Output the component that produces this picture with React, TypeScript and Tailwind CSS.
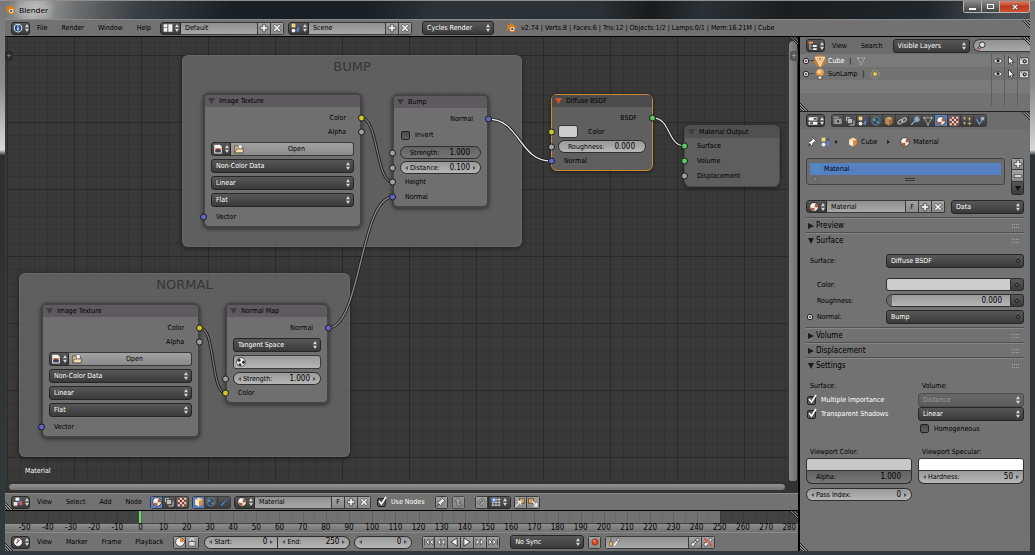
import type { ReactNode } from "react";
import clsx from "clsx";

const DARK = "bg-linear-to-b from-[#585858] to-[#3a3a3a] text-white";
const LIGHT = "bg-linear-to-b from-[#a2a2a2] to-[#8a8a8a] text-black";
const FIELD = "bg-linear-to-b from-[#8f8f8f] to-[#a9a9a9] text-black";
const NUM = "bg-linear-to-b from-[#9a9a9a] to-[#b6b6b6] text-black";
const SLIDE = "bg-linear-to-b from-[#626262] to-[#767676] text-black";

const drawings: Record<string, ReactNode> = {
    info: <><circle cx="8" cy="8" r="7" fill="#dde6f2" /><circle cx="8" cy="8" r="5.4" fill="#2d4f86" /><path d="M8 7v4.5M8 3.8v1.8" stroke="#fff" strokeWidth="2.2" /></>,
    layout: <><path d="M1 2h6v5H1zM1 8h6v6H1zM8.5 2H15v12H8.5z" fill="#f1f1f1" /></>,
    scene: <><rect x="1" y="1" width="6" height="6" fill="#f0d878" /><circle cx="4" cy="12" r="3" fill="#f4f4f4" /><path d="M9 9l4-3v7l-4 2z" fill="#5b82c4" /><circle cx="11" cy="4" r="2.5" fill="#40578a" /></>,
    blender: <><path d="M1 11l6-5H3V4h6L7.500 2.300 9 1l6 5.500" fill="none" stroke="#e87d0d" strokeWidth="1.800" strokeLinejoin="round" /><circle cx="10" cy="9.500" r="5" fill="#e87d0d" /><circle cx="10" cy="9.500" r="3.300" fill="#fff" /><circle cx="10" cy="9.500" r="1.900" fill="#265787" /></>,
    outliner: <><rect x="1" y="1" width="7" height="3" fill="#f0a050" /><path d="M3 4v9h4M3 8h4" stroke="#ddd" fill="none" /><path d="M8 6.500h6v3H8zM8 11.500h6v3H8z" fill="#f2f2f2" /></>,
    props: <><rect x="1" y="2" width="14" height="5" rx="1" fill="#f1f1f1" /><rect x="1" y="9" width="14" height="5" rx="1" fill="#f1f1f1" /><path d="M9 3h5v3H9zM3 10h5v3H3z" fill="#555" /></>,
    nodes: <><rect x="1" y="8" width="6" height="6" fill="#e8e8e8" /><rect x="4" y="1" width="6" height="5" fill="#f4f4f4" /><path d="M7 11c4 0 2-6 5-6" stroke="#4a78d0" strokeWidth="2.500" fill="none" /><rect x="10" y="7" width="5" height="6" fill="#d05a40" /></>,
    clock: <><circle cx="8" cy="8" r="7" fill="#f3f3f3" stroke="#222" /><path d="M8 3v5l-3 2" stroke="#222" strokeWidth="1.300" fill="none" /><path d="M8 8l3.500-4" stroke="#c8442a" strokeWidth="1.300" /></>,
    range: <><circle cx="8" cy="8" r="7" fill="#f3f3f3" stroke="#222" /><path d="M8 8V2a6 6 0 0 1 6 6z" fill="#f08030" /></>,
    mesh: <><circle cx="8" cy="8" r="8" fill="#e8821e" opacity=".65" /><path d="M2 3h12L8 15zM5 3l3 8 3-8" fill="none" stroke="#ffe2b8" strokeWidth="1.500" /></>,
    tri: <path d="M2 3h12L8 14z" fill="none" stroke="#c9c9c9" strokeWidth="1.200" strokeDasharray="4 1.500" />,
    lamp: <><circle cx="8" cy="6" r="5" fill="#f6a04a" /><circle cx="7" cy="5" r="2" fill="#ffe9cf" /><path d="M5.500 10.500h5V15h-5z" fill="#e8e8e8" stroke="#4a3a2a" /></>,
    sun: <><circle cx="8" cy="8" r="3.500" fill="#e8cf6a" stroke="#7a6a30" /><circle cx="8" cy="8" r="6.500" fill="none" stroke="#d9c878" strokeWidth="1.500" strokeDasharray="1.500 2.600" /></>,
    eye: <><path d="M1 8q7-8 14 0-7 7-14 0z" fill="#f4f4f4" stroke="#222" /><circle cx="8" cy="7.500" r="2.600" fill="#222" /></>,
    cursor: <path d="M4 1v12l3-2.500 2 4.500 2.200-1-2-4.300H13z" fill="#f4f4f4" stroke="#111" />,
    camera: <><rect x="1" y="3" width="14" height="11" rx="1" fill="#e4e4e4" stroke="#222" /><circle cx="9" cy="8.500" r="3.500" fill="#333" /><circle cx="9" cy="8.500" r="1.500" fill="#c9c9c9" /><path d="M3 5h2" stroke="#222" strokeWidth="1.500" /></>,
    render: <><rect x="1" y="4" width="13" height="9" fill="#8d8d8d" /><circle cx="8" cy="8.500" r="3" fill="#444" stroke="#c8c8c8" /><path d="M1 2h8" stroke="#bbb" strokeWidth="1.500" /></>,
    layers: <><rect x="1" y="1" width="8" height="8" fill="#a9b6c6" stroke="#333" /><rect x="4" y="4" width="8" height="8" fill="#bcbcbc" stroke="#333" /><path d="M7 14.500h7.500V7" stroke="#c9c9c9" strokeWidth="1.500" fill="none" /></>,
    world: <><circle cx="8" cy="8" r="6.500" fill="#35506f" stroke="#8495a8" /><path d="M4 4q4-1 3 3-3 2-4-1zM9 8q5 0 3 4-3 0-3-4z" fill="#7f8f9d" /></>,
    cube: <><path d="M2 4l6-3 6 3v8l-6 3-6-3z" fill="#e88a2e" /><path d="M2 4l6 2.500L14 4 8 1z" fill="#fbd9ad" /><path d="M8 6.500V15l-6-3V4z" fill="#fff1e0" /></>,
    cubeDim: <><path d="M2 4l6-3 6 3v8l-6 3-6-3z" fill="#a06a38" /><path d="M2 4l6 2.500L14 4 8 1z" fill="#d2a678" /><path d="M8 6.500V15l-6-3V4z" fill="#b98a5c" /></>,
    link: <g fill="none" stroke="#b5b5b5" strokeWidth="1.800"><rect x="1" y="7" width="8" height="5" rx="2.500" transform="rotate(-35 5 9)" /><rect x="7" y="4" width="8" height="5" rx="2.500" transform="rotate(-35 11 6)" /></g>,
    wrench: <path d="M2 14l7-7M8 6a3.500 3.500 0 0 1 5-4l-2 2 1 1.500 2.500-1A3.500 3.500 0 0 1 9 8z" fill="#8fa9cc" stroke="#8fa9cc" strokeWidth="2" />,
    data: <><path d="M2 3h12L8 14z" fill="none" stroke="#b5b5b5" strokeWidth="1.200" /><path d="M1 2h2v2H1zM13 2h2v2h-2zM7 13h2v2H7z" fill="#ddd" /></>,
    material: <><circle cx="8" cy="8" r="7" fill="#efe4de" stroke="#2a1a16" /><path d="M9 8q0-4 2.500-5.500A6.500 6.500 0 0 1 14.500 8q-2.500 1.500-5.500 0zM8.500 9q-4 1-6.500-.5a6.500 6.500 0 0 0 6 6q1.500-2.500.5-5.500z" fill="#a8604a" /><circle cx="5.500" cy="5" r="2.500" fill="#fff" /></>,
    checker: <><path d="M1 1h14v14H1z" fill="#e0cfca" /><path d="M1 1h3.500v3.500H1zM8 1h3.500v3.500H8zM4.500 4.500H8V8H4.500zM11.500 4.500H15V8h-3.500zM1 8h3.500v3.500H1zM8 8h3.500v3.500H8zM4.500 11.500H8V15H4.500zM11.500 11.500H15V15h-3.500z" fill="#83392c" /></>,
    particles: <g stroke="#c6b27c" strokeWidth="1.300"><path d="M4 1v5M1.500 3.500h5M12 2v5M9.500 4.500h5M4 9v5M1.500 11.500h5M12 9v6M9 12h6" /></g>,
    physics: <><path d="M2 5l5 8 7-11" fill="none" stroke="#6f8fbf" strokeWidth="2" /><circle cx="12" cy="4" r="3" fill="#9db4d6" /></>,
    pin: <path d="M9 1l6 6-1.500 1-1.500-.5-3 3 .2 2.500-1.500 1L5 11.300 1.500 15 1 14.500 4.700 11 2 8.300l1-1.500 2.500.2 3-3L8 2.500z" fill="#f0f0f0" stroke="#222" />,
    image: <><path d="M2 1h9l3 3v11H2z" fill="#f4f4f4" /><path d="M3.500 6.500h9V11h-9z" fill="#d9764e" /><path d="M3.500 10q4-4 9 0v3.500h-9z" fill="#3e3e55" /></>,
    folder: <><path d="M1 3h5l1 2h7v9H1z" fill="#d8c08c" stroke="#4e3f22" /><path d="M7 1h6v7H7z" fill="#f7f7f7" stroke="#555" strokeWidth=".7" /><path d="M4 8h11.500L14 14H1.500z" fill="#f1e0b4" stroke="#4e3f22" /></>,
    ball: <><circle cx="8" cy="8" r="7" fill="#f2f2f2" stroke="#222" /><path d="M5 2l3 3-3 3-3-2zM9 8l4-3 1.500 4-3 2zM5 10l4 1-1 3.500-4-1.500z" fill="#222" /></>,
    brush: <path d="M2 15q0-4 4-6l8-8q1 0 1 1l-7 9q-2 4-6 4z" fill="#5f86c0" stroke="#1e2f4c" strokeWidth=".8" />,
    plus: <path d="M6 2h4v4h4v4h-4v4H6v-4H2V6h4z" fill="#f6f6f6" stroke="#222" />,
    minus: <path d="M2 6h12v4H2z" fill="#f6f6f6" stroke="#222" />,
    cross: <path d="M2 4.500L4.500 2 8 5.500 11.500 2 14 4.500 10.500 8l3.500 3.500-2.500 2.500L8 10.500 4.500 14 2 11.500 5.500 8z" fill="#f6f6f6" stroke="#222" />,
    down: <path d="M2 4h12L8 14z" fill="#111" />,
    up: <path d="M6 14V7H3l5-6 5 6h-3v4h4v3z" fill="#b8b8b8" stroke="#444" />,
    magnet: <path d="M2 9l6-6a4 4 0 0 1 5.500 5.500L8 14l-2-2 5-5.500a1 1 0 0 0-1.500-1.500L4 11z" fill="#b0b0b0" stroke="#444" />,
    snap: <><path d="M3 1v14M8 1v14M13 1v14M1 4h14M1 8.500h14M1 13h14" stroke="#e4e4e4" strokeWidth="1.200" /><circle cx="4.500" cy="4.500" r="4" fill="#5b8ae0" /><circle cx="4.500" cy="4.500" r="1.800" fill="#fff" /></>,
    copy: <><rect x="7" y="2" width="8" height="8" fill="#d1a36a" stroke="#4e3f22" /><path d="M1 15l7-7M4 7h5v5" stroke="#f4f4f4" strokeWidth="2" fill="none" /></>,
    paste: <><rect x="1" y="2" width="8" height="8" fill="#d1a36a" stroke="#4e3f22" /><path d="M7 7l7 7M14 9v5.500H9" stroke="#f4f4f4" strokeWidth="2" fill="none" /></>,
    lock: <><path d="M5 8V5a3 3 0 0 1 6 0v1" fill="none" stroke="#e8e8e8" strokeWidth="1.800" /><rect x="3" y="7.500" width="10" height="7" fill="#dcdcdc" stroke="#333" /></>,
    first: <path d="M1 3v10M8 3L3 8l5 5zM14.500 3l-5 5 5 5z" fill="#f6f6f6" stroke="#222" />,
    prevKey: <path d="M7.500 3l-5 5 5 5zM14 3L9 8l5 5z" fill="#f6f6f6" stroke="#222" />,
    reverse: <path d="M13 1.500v13L3 8z" fill="#f6f6f6" stroke="#222" strokeWidth="1.300" />,
    play: <path d="M3 1.500v13L13 8z" fill="#f6f6f6" stroke="#222" strokeWidth="1.300" />,
    nextKey: <path d="M2 3l5 5-5 5zM8.500 3l5 5-5 5z" fill="#f6f6f6" stroke="#222" />,
    last: <path d="M1.500 3l5 5-5 5zM8 3l5 5-5 5zM15 3v10" fill="#f6f6f6" stroke="#222" />,
    record: <><circle cx="8" cy="8" r="5" fill="#e24a20" stroke="#6e2412" /><circle cx="6.500" cy="6.500" r="1.800" fill="#f58c6a" /></>,
    keying: <><path d="M4 1v7M2 8h4v5H2z" fill="#e9d277" stroke="#6e5a20" /><path d="M8 13l5-7" stroke="#eee" strokeWidth="2" /><circle cx="13.500" cy="5" r="2" fill="#eee" stroke="#444" /></>,
    key: <><path d="M5 12l6-7" stroke="#222" strokeWidth="4" /><circle cx="4.500" cy="12" r="3" fill="#f4f4f4" stroke="#222" /><path d="M5 12l6-7" stroke="#f4f4f4" strokeWidth="2" /><circle cx="12" cy="4.500" r="2.500" fill="#f4f4f4" stroke="#222" /></>,
    keyOff: <><circle cx="4.500" cy="12" r="3" fill="#f4f4f4" stroke="#222" /><path d="M5 12l6-7" stroke="#f4f4f4" strokeWidth="2" /><circle cx="12" cy="4.500" r="2.500" fill="#f4f4f4" stroke="#222" /><path d="M2 2l12 12" stroke="#e04a28" strokeWidth="2.500" /></>,
    lens: <><path d="M2 14l5-5" stroke="#222" strokeWidth="4" /><path d="M2 14l5-5" stroke="#d99a86" strokeWidth="2.200" /><circle cx="10" cy="6" r="4.500" fill="#dcdcdc" stroke="#222" strokeWidth="1.400" /></>,
    expand: <><circle cx="8" cy="8" r="5.500" fill="#e8e8e8" stroke="#222" strokeWidth="2" /><path d="M8 5.500v5M5.500 8h5" stroke="#222" strokeWidth="1.600" /></>,
};

const Icon = ({ name, size = "size-2.5", className }: { name: string; size?: string; className?: string }) => (
    <svg viewBox="0 0 16 16" className={clsx("shrink-0", size, className)} aria-hidden="true">{drawings[name]}</svg>
);

const UpDown = () => (
    <svg viewBox="0 0 5 10" className="h-2 w-1 shrink-0 fill-[#d8d8d8]" aria-hidden="true"><path d="M2.500 0L5 4H0zM2.500 10L0 6h5z" /></svg>
);

const Corner = ({ className }: { className: string }) => (
    <svg viewBox="0 0 8 8" className={clsx("pointer-events-none absolute size-2", className)} aria-hidden="true">
        <path d="M0 0l8 8M3 0l5 5M6 0l2 2" stroke="#222" /><path d="M1 0l7 7M4 0l4 4" stroke="#aaa" strokeWidth=".6" />
    </svg>
);

/* lower left grip, same stripes below the diagonal */
const CornerLeft = () => <Corner className="bottom-0 left-0 rotate-180" />;

const EditorButton = ({ icon, label, className = "w-[19px] rounded-[3px]" }: { icon: string; label: string; className?: string }) => (
    <button aria-label={label} className={clsx("flex h-[13px] shrink-0 items-center justify-center gap-0.5 border border-[#2a2a2a]", DARK, className)}>
        <Icon name={icon} /><UpDown />
    </button>
);

const Square = ({ icon, label, className = LIGHT }: { icon: string; label: string; className?: string }) => (
    <button aria-label={label} className={clsx("flex h-[13px] w-[13px] shrink-0 items-center justify-center border border-[#3a3a3a] not-first:border-l-0", className)}>
        <Icon name={icon} />
    </button>
);

const Group = ({ children }: { children: ReactNode }) => <div className="flex shrink-0 overflow-hidden rounded-[3px]">{children}</div>;

const Menus = ({ items }: { items: string[] }) => (
    <nav className="ml-[7px] flex gap-3.5">{items.map((item) => <button key={item}>{item}</button>)}</nav>
);

const Dot = () => <span className="size-1 rounded-full border border-[#1c1c1c] bg-[#6a6a6a]" />;

const Select = ({ label, value, className, disabled, dot }: { label: string; value: string; className?: string; disabled?: boolean; dot?: boolean }) => (
    <div className={clsx("flex h-[14px] items-center rounded-[3px] border pr-[3px]", disabled ? "border-[#4e4e4e] bg-linear-to-b from-[#676767] to-[#5c5c5c] text-[#9a9a9a]" : clsx("border-[#262626]", DARK), className)}>
        <select aria-label={label} disabled={disabled} className="h-full min-w-0 flex-1 appearance-none bg-transparent pl-1 outline-none">
            <option>{value}</option>
        </select>
        {dot ? <Dot /> : <UpDown />}
    </div>
);

const IdField = ({ icon, label, value, fake, className = "w-[77px]" }: { icon: string; label: string; value: string; fake?: boolean; className?: string }) => (
    <Group>
        <EditorButton icon={icon} label={`Browse ${label}`} className="w-[21px] rounded-l-[3px]" />
        <input aria-label={label} defaultValue={value} className={clsx("h-[13px] min-w-0 border border-l-0 border-[#3a3a3a] pl-1 outline-none", FIELD, className)} />
        {fake && <button className={clsx("h-[13px] w-[13px] border border-l-0 border-[#3a3a3a]", LIGHT)}>F</button>}
        <Square icon="plus" label={`Add ${label}`} />
        <Square icon="cross" label={`Unlink ${label}`} />
    </Group>
);

const NumField = ({ label, value, tone = NUM, arrows = true, className = "rounded-full" }: { label: string; value: string; tone?: string; arrows?: boolean; className?: string }) => (
    <label className={clsx("flex h-[13px] items-center border border-[#2e2e2e] px-1", tone, className)}>
        <svg viewBox="0 0 3 4" className={clsx("h-1 w-[3px] shrink-0 fill-[#555]", !arrows && "invisible")} aria-hidden="true"><path d="M3 0v4L0 2z" /></svg>
        <span className="ml-0.5 whitespace-nowrap">{label}</span>
        <input aria-label={label || "Current frame"} defaultValue={value} className="mr-[3px] w-0 min-w-0 flex-1 bg-transparent text-right text-[8px] outline-none" />
        <svg viewBox="0 0 3 4" className={clsx("h-1 w-[3px] shrink-0 fill-[#555]", !arrows && "invisible")} aria-hidden="true"><path d="M0 0v4l3-2z" /></svg>
    </label>
);

const Check = ({ label, checked, className }: { label: string; checked?: boolean; className?: string }) => (
    <label className={clsx("flex items-center gap-[5px] whitespace-nowrap", className)}>
        <span className="relative flex size-[9px]">
            <input type="checkbox" defaultChecked={checked} className="peer size-[9px] appearance-none rounded-[2px] border border-[#222] bg-linear-to-b from-[#4a4a4a] to-[#606060]" />
            <svg viewBox="0 0 10 10" className="pointer-events-none absolute -top-0.5 left-0 hidden size-2.5 peer-checked:block" aria-hidden="true"><path d="M2 5l2.500 3L9 1" fill="none" stroke="#fff" strokeWidth="1.600" /></svg>
        </span>
        {label}
    </label>
);

/* node editor */

const socketColors = { yellow: "bg-[#c9c72c]", gray: "bg-[#a1a1a1]", blue: "bg-[#6464c8]", green: "bg-[#5bc95b]" };

const Socket = ({ color, side }: { color: keyof typeof socketColors; side: "left" | "right" }) => (
    <span className={clsx("absolute top-1/2 size-[7px] -translate-y-1/2 rounded-full border border-[#1c1c1c]", socketColors[color], side === "left" ? "-left-[3px]" : "-right-[3px]")} />
);

const Row = ({ children, color, out, className = "h-[14px]" }: { children: ReactNode; color?: keyof typeof socketColors; out?: boolean; className?: string }) => (
    <div className={clsx("relative flex items-center", out ? "justify-end pr-4" : "pl-[13px]", className)}>
        {children}
        {color && <Socket color={color} side={out ? "right" : "left"} />}
    </div>
);

const Node = ({ title, children, place, head = "bg-[#5e5a60]", arrow = "fill-[#3c3c3c]", frame = "border-2 border-[#444] bg-[#6f6f6f]" }: { title: string; children: ReactNode; place: string; head?: string; arrow?: string; frame?: string }) => (
    <section className={clsx("absolute rounded-md shadow-[0_1px_4px_#0008]", frame, place)}>
        <h3 className={clsx("flex h-3 items-center gap-1 rounded-t-[4px] pl-[3px]", head)}>
            <svg viewBox="0 0 7 6" className={clsx("h-1.5 w-[7px]", arrow)} aria-hidden="true"><path d="M0 0h7L3.500 6z" /></svg>
            {title}
        </h3>
        {children}
    </section>
);

const ImageTexture = ({ place }: { place: string }) => (
    <Node title="Image Texture" place={place}>
        <div className="-mx-0.5 pt-1 pb-0.5">
            <Row color="yellow" out>Color</Row>
            <Row color="gray" out>Alpha</Row>
            <div className="mt-[3px] mb-[3px] flex flex-col gap-[3px] px-2">
                <div className="flex h-[14px]">
                    <EditorButton icon="image" label="Browse image" className="h-[14px] w-5 rounded-l-[3px]" />
                    <button className={clsx("flex flex-1 items-center rounded-r-[3px] border border-l-0 border-[#3a3a3a] pl-[3px]", LIGHT)}>
                        <Icon name="folder" /><span className="flex-1 pr-1">Open</span>
                    </button>
                </div>
                <Select label="Color space" value="Non-Color Data" />
                <Select label="Interpolation" value="Linear" />
                <Select label="Projection" value="Flat" />
            </div>
            <Row color="blue">Vector</Row>
        </div>
    </Node>
);

const Frame = ({ title, place }: { title: string; place: string }) => (
    <div className={clsx("absolute rounded-md border border-[#777]/40 bg-[#696969]/80 pt-[3px] text-center font-['DejaVu_Sans',sans-serif] text-[13px] leading-[15px] text-[#363636] shadow-[0_1px_5px_#0008]", place)}>{title}</div>
);

const links = [
    { d: "M356 81C374 81 370 145 388 145", color: "#777" },
    { d: "M195 291C211 291 205 356 221 356", color: "#777" },
    { d: "M323 291C356 291 355 160 388 160", color: "#8a8a8a" },
    { d: "M483 82C515 82 514 124 546 124", color: "#e8e8e8" },
    { d: "M648 81C666 81 662 109 680 109", color: "#ddd" },
];

const NodeEditor = () => (
    <main className="relative min-h-[456px] flex-1 overflow-hidden bg-[#393939]">
        <svg className="absolute inset-0 size-full" aria-hidden="true">
            <defs>
                <pattern id="grid" width="67" height="67" x="2" y="18" patternUnits="userSpaceOnUse">
                    <path d="M13.500 0v67M27.500 0v67M40.500 0v67M54.500 0v67M0 13.500h67M0 27.500h67M0 40.500h67M0 54.500h67" stroke="#333" />
                    <path d="M.5 0v67M0 .5h67" stroke="#2a2a2a" />
                </pattern>
            </defs>
            <rect width="100%" height="100%" fill="url(#grid)" />
        </svg>
        <Frame title="BUMP" place="left-[177px] top-[18px] h-[192px] w-[340px]" />
        <Frame title="NORMAL" place="left-[14px] top-[236px] h-[184px] w-[331px]" />
        <svg className="pointer-events-none absolute inset-0 size-full" fill="none" aria-hidden="true">
            {links.map((link) => <g key={link.d}><path d={link.d} stroke="#1c1c1c" strokeWidth="3" /><path d={link.d} stroke={link.color} strokeWidth="1.300" /></g>)}
        </svg>
        <ImageTexture place="left-[198px] top-[56px] w-[159px]" />
        <ImageTexture place="left-[36px] top-[266px] w-[159px]" />
        <Node title="Bump" place="left-[387px] top-[57px] w-[97px]">
            <div className="-mx-0.5 pt-1 pb-0.5">
                <Row color="blue" out>Normal</Row>
                <Row className="mt-0.5 h-[14px]"><Check label="Invert" className="-ml-1" /></Row>
                <Row color="gray" className="mt-1 h-[13px]"><NumField label="Strength:" value="1.000" tone={SLIDE} arrows={false} className="-ml-[5px] mr-2 flex-1 rounded-full" /></Row>
                <Row color="gray" className="mt-0.5 h-[13px]"><NumField label="Distance:" value="0.100" className="-ml-[5px] mr-2 flex-1 rounded-full" /></Row>
                <Row color="gray" className="mt-px h-[14px]">Height</Row>
                <Row color="blue" className="mt-px h-[14px]">Normal</Row>
            </div>
        </Node>
        <Node title="Normal Map" place="left-[220px] top-[266px] w-[104px]">
            <div className="-mx-0.5 pt-1 pb-0.5">
                <Row color="blue" out>Normal</Row>
                <div className="mt-[3px] flex flex-col gap-[3px] px-2">
                    <Select label="Space" value="Tangent Space" />
                    <label className={clsx("flex h-[14px] items-center rounded-[3px] border border-[#3a3a3a] pl-0.5", NUM)}>
                        <Icon name="ball" /><input aria-label="UV map" className="min-w-0 flex-1 outline-none" />
                    </label>
                </div>
                <Row color="gray" className="mt-[3px] h-[13px]"><NumField label="Strength:" value="1.000" className="-ml-[5px] mr-2 flex-1 rounded-full" /></Row>
                <Row color="yellow" className="mt-px h-[14px]">Color</Row>
            </div>
        </Node>
        <Node title="Diffuse BSDF" place="left-[546px] top-[57px] w-[102px]" head="bg-[#4b4b4b]" arrow="fill-[#d8532a]" frame="border border-[#c98a35] bg-[#5f5f5f]">
            <div className="-mx-px pt-1 pb-0.5">
                <Row color="green" out>BSDF</Row>
                <Row color="yellow" className="h-[13px]">
                    <button aria-label="Color" className="-ml-1.5 mr-2.5 h-[13px] w-5 rounded-[3px] border border-[#333] bg-[#cdcdcd]" />Color
                </Row>
                <Row color="gray" className="mt-0.5 h-[13px]"><NumField label="Roughness:" value="0.000" arrows={false} className="-ml-1.5 mr-[7px] flex-1 rounded-full" /></Row>
                <Row color="blue" className="mt-px h-[14px]">Normal</Row>
            </div>
        </Node>
        <Node title="Material Output" place="left-[679px] top-[88px] w-[96px]" head="bg-[#505050]" frame="border border-[#4a4a4a] bg-[#5e5e5e]">
            <div className="-mx-px pt-px pb-[3px]">
                <Row color="green">Surface</Row>
                <Row color="green" className="mt-px h-[14px]">Volume</Row>
                <Row color="gray" className="mt-px h-[14px]">Displacement</Row>
            </div>
        </Node>
        <span className="absolute bottom-[17px] left-5 text-white">Material</span>
        <span className="absolute top-3.5 left-0 flex h-2.5 w-2 items-center justify-center rounded-r-[3px] bg-[#2c2c2c] text-[#999]">+</span>
        <div className="absolute top-0 right-0 bottom-2.5 w-2.5 bg-[#323232] pt-[3px]"><div className="h-full rounded-full border border-[#333] bg-linear-to-r from-[#8a8a8a] to-[#6e6e6e]" /></div>
        <div className="absolute inset-x-0 bottom-0 h-3 bg-[#333] py-0.5 pr-3 pl-[3px]"><div className="h-full rounded-full border border-[#333] bg-linear-to-b from-[#929292] to-[#747474]" /></div>
        <span className="absolute top-3.5 right-0 flex h-2.5 w-2 items-center justify-center rounded-l-[3px] bg-[#555] text-[#bbb]">+</span>
        <Corner className="top-0 right-0" />
    </main>
);

const barClass = "relative flex shrink-0 items-center border-t border-[#8a8a8a] bg-[#727272] px-1.5";

const NodeHeader = () => (
    <div className={clsx(barClass, "h-[17px]")}>
        <EditorButton icon="nodes" label="Editor type" />
        <Menus items={["View", "Select", "Add", "Node"]} />
        <div className="ml-2 flex gap-[3px]">
            <Group>
                <Square icon="material" label="Shader nodes" className="bg-[#5680c2]" />
                <Square icon="layers" label="Compositing nodes" className={DARK} />
                <Square icon="checker" label="Texture nodes" className={DARK} />
            </Group>
            <Group>
                <Square icon="cube" label="Object" className="bg-[#5680c2]" />
                <Square icon="world" label="World" className={DARK} />
                <Square icon="brush" label="Line style" className={DARK} />
            </Group>
            <IdField icon="material" label="Material name" value="Material" fake />
        </div>
        <Check label="Use Nodes" checked className="mr-2.5 ml-1.5 text-white" />
        <Group><Square icon="pin" label="Pin" /></Group>
        <div className="ml-1 opacity-70"><Group><Square icon="up" label="Parent node tree" /></Group></div>
        <div className="ml-2.5 flex gap-[3px]">
            <Group>
                <Square icon="magnet" label="Snap" />
                <EditorButton icon="snap" label="Snap element" className="w-[23px]" />
            </Group>
            <Group><Square icon="copy" label="Copy" /><Square icon="paste" label="Paste" /></Group>
        </div>
        <CornerLeft />
    </div>
);

const frames = Array.from({ length: 34 }, (_, i) => -50 + i * 10);

const Timeline = () => (
    <div className="relative shrink-0 overflow-hidden border-t border-black bg-[#727272]">
        <div className="-mr-[3px] flex">
            <div className="w-2 bg-[#424242]" />
            {frames.map((frame) => (
                <div key={frame} className="flex h-3 flex-1">
                    <span className={clsx("flex-1 border-l", frame <= 0 || frame > 250 ? "border-[#3c3c3c] bg-[#424242]" : "border-[#6a6a6a] bg-[#727272]", frame === 0 && "border-r-2 border-r-[#5fe05f]")} />
                    <span className={clsx("flex-1 border-l", frame < 0 || frame >= 250 ? "border-[#383838] bg-[#424242]" : "border-[#626262] bg-[#727272]")} />
                </div>
            ))}
        </div>
        <div className="-mr-[3px] flex h-[9px] items-center border-t border-[#444] bg-linear-to-b from-[#8e8e8e] to-[#707070] pl-2 text-[8px] leading-[8px]">
            {frames.map((frame) => <span key={frame} className="w-0 flex-1 text-center">{frame <= 280 ? frame : ""}</span>)}
        </div>
        <Corner className="top-0 right-0" />
    </div>
);

const TimelineHeader = () => (
    <div className={clsx(barClass, "h-[19px]")}>
        <EditorButton icon="clock" label="Editor type" />
        <Menus items={["View", "Marker", "Frame", "Playback"]} />
        <div className="mr-[5px] ml-2.5"><Group><Square icon="range" label="Preview range" /><Square icon="lock" label="Lock time" /></Group></div>
        <NumField label="Start:" value="0" className="w-[74px] rounded-l-full" />
        <NumField label="End:" value="250" className="w-[72px] rounded-r-full border-l-0" />
        <NumField label="" value="0" className="ml-1 w-[58px] rounded-full" />
        <div className="mr-2.5 ml-2.5"><Group>
            <Square icon="first" label="Jump to start" />
            <Square icon="prevKey" label="Previous keyframe" />
            <Square icon="reverse" label="Play reverse" />
            <Square icon="play" label="Play" />
            <Square icon="nextKey" label="Next keyframe" />
            <Square icon="last" label="Jump to end" />
        </Group></div>
        <Select label="Sync mode" value="No Sync" className="w-[74px]" />
        <div className="mx-1"><Group><Square icon="record" label="Auto keyframe" /></Group></div>
        <Group>
            <label className={clsx("flex h-[13px] w-[84px] items-center border border-[#3a3a3a] pl-0.5", FIELD)}><Icon name="keying" size="size-3" /><input aria-label="Keying set" className="min-w-0 flex-1 outline-none" /></label>
            <Square icon="key" label="Insert keyframe" />
            <Square icon="keyOff" label="Delete keyframe" />
        </Group>
        <CornerLeft />
    </div>
);

/* right column */

const Outliner = () => (
    <div className="relative h-[75px] shrink-0 overflow-hidden border-b border-[#222] bg-[#727272]">
        <div className="flex h-[17px] items-center bg-[#6c6c6c] pl-1.5">
            <EditorButton icon="outliner" label="Editor type" />
            <Menus items={["View", "Search"]} />
            <Select label="Display mode" value="Visible Layers" className="ml-2.5 w-[77px]" />
            <label className={clsx("ml-[3px] flex h-[13px] flex-1 items-center rounded-l-full border border-r-0 border-[#3a3a3a] pl-0.5", FIELD)}>
                <Icon name="lens" /><input aria-label="Search" className="w-0 min-w-0 flex-1 outline-none" />
            </label>
        </div>
        {[["Cube", "mesh", "tri"], ["SunLamp", "lamp", "sun"], ["", "", ""], ["", "", ""]].map(([name, icon, data], key) => (
            <div key={key} className="flex h-[13px] items-stretch odd:bg-[#727272] even:bg-[#7a7a7a]">
                {name && <div className="flex flex-1 items-center pl-0.5">
                    <Icon name="expand" size="size-2" /><span className="h-px w-1 bg-[#444]" />
                    <Icon name={icon} size="size-3" className="mr-0.5" />
                    <span className={clsx(key === 0 && "text-white")}>{name}</span>
                    <span className="mx-[5px]">|</span><Icon name={data} />
                </div>}
                <div className="ml-auto flex w-[39px] shrink-0 items-stretch">
                    {["eye", "cursor", "camera"].map((toggle) => <span key={toggle} className="flex w-[13px] items-center justify-center border-l border-[#5e5e5e]">{name && <button aria-label={toggle}><Icon name={toggle} className="block" /></button>}</span>)}
                </div>
            </div>
        ))}
        <Corner className="top-0 right-0" />
        <CornerLeft />
    </div>
);

const Panel = ({ title, open, children }: { title: string; open?: boolean; children?: ReactNode }) => (
    <section className="mx-1.5 -mt-px">
        <h2 className="flex h-4 items-center border-t border-[#505050] text-[8px] shadow-[inset_0_1px_#868686]">
            <button className="flex items-center gap-0.5" aria-expanded={!!open}>
                <svg viewBox="0 0 8 8" className="ml-0.5 size-1.5 fill-[#1c1c1c]" aria-hidden="true"><path d={open ? "M0 0h8L4 8z" : "M0 0v8l8-4z"} /></svg>{title}
            </button>
            <svg viewBox="0 0 8 4" className="mr-1 ml-auto h-1 w-2" aria-hidden="true"><path d="M0 .5h8M0 3.500h8" stroke="#a5a5a5" strokeDasharray="1 1" /></svg>
        </h2>
        {children}
    </section>
);

const DotButton = ({ label }: { label: string }) => (
    <button aria-label={label} className={clsx("flex h-[13px] w-[13px] items-center justify-center rounded-r-[3px] border border-l-0 border-[#2e2e2e]", DARK)}><Dot /></button>
);

const Prop = ({ label, children, icon, className = "pl-[11px]" }: { label: string; children: ReactNode; icon?: string; className?: string }) => (
    <div className="flex h-[13px] items-center">
        <span className={clsx("flex w-20 shrink-0 items-center", className)}>{icon && <Icon name={icon} size="size-2" className="mr-[3px]" />}{label}</span>
        <div className="flex flex-1">{children}</div>
    </div>
);

const tabs = ["render", "layers", "scene", "world", "cubeDim", "link", "wrench", "data", "material", "checker", "particles", "physics"];

const PathArrow = () => <svg viewBox="0 0 3 4" className="h-1 w-[3px] fill-[#222]" aria-hidden="true"><path d="M0 0v4l3-2z" /></svg>;

const Properties = () => (
    <div className="relative flex-1 bg-[#727272]">
        <div className="flex h-[17px] items-center bg-[#6c6c6c] pl-1.5">
            <EditorButton icon="props" label="Editor type" />
            <div className="ml-1.5"><Group>{tabs.map((tab) => <Square key={tab} icon={tab} label={tab} className={tab === "material" ? "bg-[#5680c2]" : DARK} />)}</Group></div>
        </div>
        <div className="mt-1 flex h-[17px] items-center pl-[7px]">
            <Icon name="pin" className="mr-1" /><Icon name="scene" className="mr-1" /><PathArrow />
            <Icon name="cube" className="mr-[3px] ml-2.5" />Cube<span className="w-2.5" /><PathArrow />
            <Icon name="material" className="mr-[3px] ml-2.5" />Material
        </div>
        <div className="mt-2 mr-1.5 ml-1.5 flex items-start gap-1.5">
            <div className="h-[27px] flex-1 rounded-[3px] border border-[#444] bg-[#6c6c6c] p-[3px]">
                <div className="mt-px flex h-3 items-center bg-[#5680c2] pl-0.5"><span className="mr-0.5 size-2.5 rounded-full bg-linear-to-br from-[#4f93b5] to-[#5680c2]" />Material</div>
                <div className="flex h-2 items-center"><Icon name="expand" size="size-1.5" className="ml-0.5 opacity-60" /><span className="mx-auto h-[3px] w-2.5 border-y border-[#3a3a3a]" /></div>
            </div>
            <div className="flex w-[13px] flex-col gap-0 overflow-hidden rounded-[3px]">
                <button aria-label="Add slot" className={clsx("flex h-3 items-center justify-center border border-[#3a3a3a]", LIGHT)}><Icon name="plus" /></button>
                <button aria-label="Remove slot" className={clsx("flex h-3 items-center justify-center border border-t-0 border-[#3a3a3a]", LIGHT)}><Icon name="minus" /></button>
                <button aria-label="Slot specials" className={clsx("flex h-[13px] items-center justify-center border border-t-0 border-[#2a2a2a]", DARK)}><Icon name="down" size="size-2" /></button>
            </div>
        </div>
        <div className="mt-[5px] mb-1 flex gap-1.5 px-1.5">
            <IdField icon="material" label="Material name" value="Material" fake className="w-[79px]" />
            <Select label="Link" value="Data" className="h-[13px] flex-1" />
        </div>
        <Panel title="Preview" />
        <Panel title="Surface" open>
            <div className="flex flex-col gap-[3px] pt-1.5 pb-[5px]">
                <div className="mb-2"><Prop label="Surface:" className="pl-1"><Select label="Surface shader" value="Diffuse BSDF" dot className="flex-1" /></Prop></div>
                <Prop label="Color:"><button aria-label="Color" className="h-[13px] flex-1 rounded-l-[3px] border border-[#2e2e2e] bg-[#cdcdcd]" /><DotButton label="Color input" /></Prop>
                <Prop label="Roughness:"><div className="flex h-[13px] flex-1 overflow-hidden rounded-l-full border border-[#2e2e2e]"><span className="w-[5px] bg-[#6a6a6a]" /><input aria-label="Roughness" defaultValue="0.000" className={clsx("w-0 flex-1 pr-2 text-right text-[8px] outline-none", NUM)} /></div><DotButton label="Roughness input" /></Prop>
                <Prop label="Normal:" icon="expand" className="pl-0"><Select label="Normal input" value="Bump" dot className="flex-1" /></Prop>
            </div>
        </Panel>
        <Panel title="Volume" />
        <Panel title="Displacement" />
        <Panel title="Settings" open>
            <div className="grid grid-cols-2 gap-x-1.5 pt-1.5">
                <div className="flex flex-col">
                    <span className="flex h-3.5 items-center pl-1">Surface:</span>
                    <Check label="Multiple Importance" checked className="h-3.5 pl-px text-white" />
                    <Check label="Transparent Shadows" checked className="h-3.5 pl-px text-white" />
                </div>
                <div className="flex flex-col">
                    <span className="flex h-3.5 items-center pl-1">Volume:</span>
                    <Select label="Volume sampling" value="Distance" disabled />
                    <Select label="Volume interpolation" value="Linear" />
                    <Check label="Homogeneous" className="h-[15px] pl-0.5" />
                </div>
                <div className="mt-2.5 flex flex-col">
                    <span className="flex h-3 items-center pl-1">Viewport Color:</span>
                    <button aria-label="Viewport color" className="h-[13px] rounded-t-[3px] border border-[#333] bg-[#c8c8c8]" />
                    <NumField label="Alpha:" value="1.000" tone={SLIDE} arrows={false} className="rounded-b-md border-t-0" />
                    <NumField label="Pass Index:" value="0" className="mt-1 rounded-full" />
                </div>
                <div className="mt-2.5 flex flex-col">
                    <span className="flex h-3 items-center pl-1">Viewport Specular:</span>
                    <button aria-label="Viewport specular" className="h-[13px] rounded-t-[3px] border border-[#333] bg-white" />
                    <NumField label="Hardness:" value="50" className="rounded-b-md border-t-0" />
                </div>
            </div>
        </Panel>
        <Corner className="top-0 right-0" />
        <CornerLeft />
    </div>
);

const TitleBar = () => (
    <header className="flex h-[18px] shrink-0 items-center bg-[linear-gradient(100deg,#777_0%,#a0a0a0_3%,#6c6e70_7%,#3a3f43_13%,#1b2024_22%,#1a1f23_35%,#2d3236_42%,#2b3034_58%,#171b1e_63%,#2c3135_68%,#1a1e21_76%,#202529_90%,#4a4f53_97%)]">
        <Icon name="blender" />
        <h1 className="ml-1 flex-1 font-['Open_Sans',sans-serif] text-[8px]"><span className="rounded-full bg-white/25 shadow-[0_0_6px_4px_#ffffff40]">Blender</span></h1>
        <div className="flex h-3 self-start overflow-hidden rounded-b-[3px] border border-t-0 border-[#b5b5b5]">
            <button aria-label="Minimize" className="flex w-[18px] items-center justify-center border-r border-[#b5b5b5] bg-linear-to-b from-[#888] to-[#444]"><span className="mt-1 h-0.5 w-[7px] bg-white" /></button>
            <button aria-label="Maximize" className="flex w-[18px] items-center justify-center border-r border-[#b5b5b5] bg-linear-to-b from-[#888] to-[#444]"><span className="h-[5px] w-[7px] border border-white" /></button>
            <button aria-label="Close" className="flex w-[29px] items-center justify-center bg-linear-to-b from-[#d8806c] via-[#c0391c] to-[#d0502c]"><Icon name="cross" size="size-2" /></button>
        </div>
    </header>
);

const InfoHeader = () => (
    <div className={clsx(barClass, "h-[17px] whitespace-nowrap")}>
        <EditorButton icon="info" label="Editor type" />
        <Menus items={["File", "Render", "Window", "Help"]} />
        <div className="ml-[9px] flex gap-1">
            <IdField icon="layout" label="Screen" value="Default" />
            <IdField icon="scene" label="Scene" value="Scene" />
        </div>
        <Select label="Render engine" value="Cycles Render" className="mr-3 ml-2.5 h-[13px] w-[72px]" />
        <Icon name="blender" className="mr-[5px]" />
        v2.74 | Verts:8 | Faces:6 | Tris:12 | Objects:1/2 | Lamps:0/1 | Mem:16.21M | Cube
        <Corner className="top-0 right-0" />
    </div>
);

export default function App() {
    return (
        <div className="flex min-h-screen flex-col bg-[linear-gradient(#777,#8a8a8a_15%,#d8d8d8_27%,#2c3033_28%,#33383c)] px-[5px] pb-1 font-['DejaVu_Sans_Condensed','DejaVu_Sans',sans-serif] text-[7px] leading-[10px] text-black">
            <div className="-mx-[5px] h-px bg-[#8d8d8d]" />
            <TitleBar />
            <InfoHeader />
            <div className="flex flex-1 border-t border-black">
                <div className="flex min-w-0 flex-1 flex-col">
                    <NodeEditor />
                    <NodeHeader />
                    <Timeline />
                    <TimelineHeader />
                </div>
                <div className="flex w-[232px] shrink-0 flex-col border-l-2 border-black">
                    <Outliner />
                    <Properties />
                </div>
            </div>
        </div>
    );
}
